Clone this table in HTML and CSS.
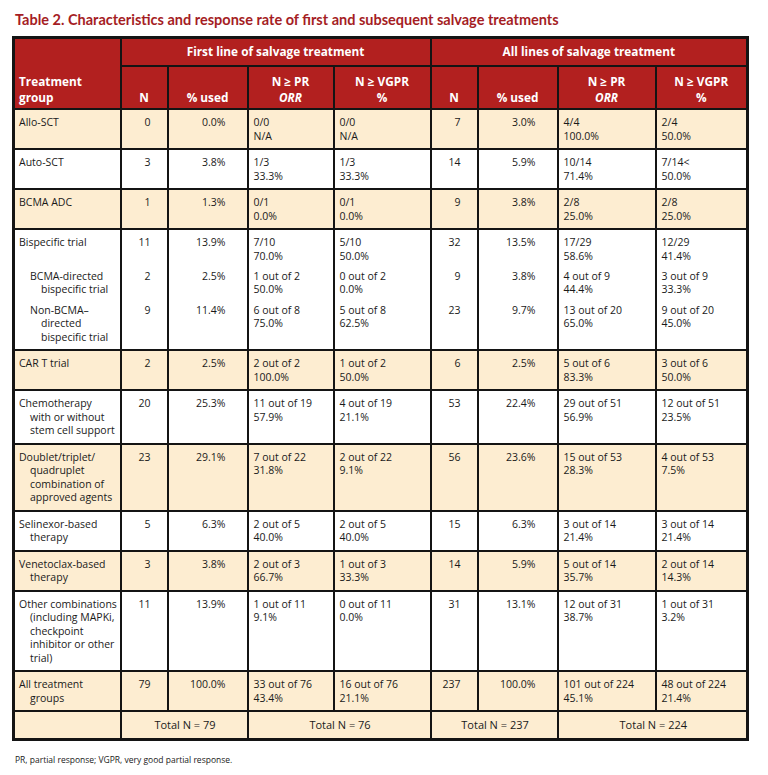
FILE: index.html
```html
<!DOCTYPE html>
<html>
<head>
<meta charset="utf-8">
<link rel="stylesheet" href="styles.css">
</head>
<body>
<div class="page">
  <h1 class="title">Table 2. Characteristics and response rate of first and subsequent salvage treatments</h1>
  <table class="tbl">
    <colgroup>
      <col class="c-group"><col class="c-n"><col class="c-pct"><col class="c-pr"><col class="c-vgpr">
      <col class="c-n2"><col class="c-pct"><col class="c-pr2"><col class="c-vgpr2">
    </colgroup>
    <thead>
      <tr class="h1">
        <th rowspan="2" class="th-group">Treatment<br>group</th>
        <th colspan="4">First line of salvage treatment</th>
        <th colspan="4">All lines of salvage treatment</th>
      </tr>
      <tr class="h2">
        <th>N</th><th>% used</th><th>N ≥ PR<br><i>ORR</i></th><th>N ≥ VGPR<br>%</th>
        <th>N</th><th>% used</th><th>N ≥ PR<br><i>ORR</i></th><th>N ≥ VGPR<br>%</th>
      </tr>
    </thead>
    <tbody>
      <tr class="beige">
        <td class="g">Allo-SCT</td><td class="n">0</td><td class="p">0.0%</td><td>0/0<br>N/A</td><td>0/0<br>N/A</td>
        <td class="n">7</td><td class="p">3.0%</td><td>4/4<br>100.0%</td><td>2/4<br>50.0%</td>
      </tr>
      <tr>
        <td class="g">Auto-SCT</td><td class="n">3</td><td class="p">3.8%</td><td>1/3<br>33.3%</td><td>1/3<br>33.3%</td>
        <td class="n">14</td><td class="p">5.9%</td><td>10/14<br>71.4%</td><td>7/14&lt;<br>50.0%</td>
      </tr>
      <tr class="beige">
        <td class="g">BCMA ADC</td><td class="n">1</td><td class="p">1.3%</td><td>0/1<br>0.0%</td><td>0/1<br>0.0%</td>
        <td class="n">9</td><td class="p">3.8%</td><td>2/8<br>25.0%</td><td>2/8<br>25.0%</td>
      </tr>
      <tr class="sub-first">
        <td class="g">Bispecific trial</td><td class="n">11</td><td class="p">13.9%</td><td>7/10<br>70.0%</td><td>5/10<br>50.0%</td>
        <td class="n">32</td><td class="p">13.5%</td><td>17/29<br>58.6%</td><td>12/29<br>41.4%</td>
      </tr>
      <tr class="sub-mid">
        <td class="g sub">BCMA-directed<br>bispecific trial</td><td class="n">2</td><td class="p">2.5%</td><td>1 out of 2<br>50.0%</td><td>0 out of 2<br>0.0%</td>
        <td class="n">9</td><td class="p">3.8%</td><td>4 out of 9<br>44.4%</td><td>3 out of 9<br>33.3%</td>
      </tr>
      <tr class="sub-last">
        <td class="g sub">Non-BCMA–<br>directed<br>bispecific trial</td><td class="n">9</td><td class="p">11.4%</td><td>6 out of 8<br>75.0%</td><td>5 out of 8<br>62.5%</td>
        <td class="n">23</td><td class="p">9.7%</td><td>13 out of 20<br>65.0%</td><td>9 out of 20<br>45.0%</td>
      </tr>
      <tr class="beige">
        <td class="g">CAR T trial</td><td class="n">2</td><td class="p">2.5%</td><td>2 out of 2<br>100.0%</td><td>1 out of 2<br>50.0%</td>
        <td class="n">6</td><td class="p">2.5%</td><td>5 out of 6<br>83.3%</td><td>3 out of 6<br>50.0%</td>
      </tr>
      <tr>
        <td class="g">Chemotherapy<br>with or without<br>stem cell support</td><td class="n">20</td><td class="p">25.3%</td><td>11 out of 19<br>57.9%</td><td>4 out of 19<br>21.1%</td>
        <td class="n">53</td><td class="p">22.4%</td><td>29 out of 51<br>56.9%</td><td>12 out of 51<br>23.5%</td>
      </tr>
      <tr class="beige">
        <td class="g">Doublet/triplet/<br>quadruplet<br>combination of<br>approved agents</td><td class="n">23</td><td class="p">29.1%</td><td>7 out of 22<br>31.8%</td><td>2 out of 22<br>9.1%</td>
        <td class="n">56</td><td class="p">23.6%</td><td>15 out of 53<br>28.3%</td><td>4 out of 53<br>7.5%</td>
      </tr>
      <tr>
        <td class="g">Selinexor-based<br>therapy</td><td class="n">5</td><td class="p">6.3%</td><td>2 out of 5<br>40.0%</td><td>2 out of 5<br>40.0%</td>
        <td class="n">15</td><td class="p">6.3%</td><td>3 out of 14<br>21.4%</td><td>3 out of 14<br>21.4%</td>
      </tr>
      <tr class="beige">
        <td class="g">Venetoclax-based<br>therapy</td><td class="n">3</td><td class="p">3.8%</td><td>2 out of 3<br>66.7%</td><td>1 out of 3<br>33.3%</td>
        <td class="n">14</td><td class="p">5.9%</td><td>5 out of 14<br>35.7%</td><td>2 out of 14<br>14.3%</td>
      </tr>
      <tr>
        <td class="g">Other combinations<br>(including MAPKi,<br>checkpoint<br>inhibitor or other<br>trial)</td><td class="n">11</td><td class="p">13.9%</td><td>1 out of 11<br>9.1%</td><td>0 out of 11<br>0.0%</td>
        <td class="n">31</td><td class="p">13.1%</td><td>12 out of 31<br>38.7%</td><td>1 out of 31<br>3.2%</td>
      </tr>
      <tr class="beige">
        <td class="g">All treatment<br>groups</td><td class="n">79</td><td class="p">100.0%</td><td>33 out of 76<br>43.4%</td><td>16 out of 76<br>21.1%</td>
        <td class="n">237</td><td class="p">100.0%</td><td>101 out of 224<br>45.1%</td><td>48 out of 224<br>21.4%</td>
      </tr>
      <tr class="beige total">
        <td></td><td colspan="2" class="t">Total N = 79</td><td colspan="2" class="t">Total N = 76</td>
        <td colspan="2" class="t">Total N = 237</td><td colspan="2" class="t">Total N = 224</td>
      </tr>
    </tbody>
  </table>
  <p class="foot">PR, partial response; VGPR, very good partial response.</p>
</div>
</body>
</html>
```
FILE: styles.css
```css
html, body {
  margin: 0;
  padding: 0;
  background: #ffffff;
}

.page {
  padding: 11px 20px 0 12px;
  font-family: "Open Sans", "Noto Sans", sans-serif;
  color: #1a1a1a;
}

.title {
  margin: 0 0 8px 3px;
  font-family: Lato, "Open Sans", sans-serif;
  font-size: 14.5px;
  line-height: 17px;
  font-weight: 700;
  color: #a51d24;
}

.tbl {
  width: 734px;
  table-layout: fixed;
  border-collapse: collapse;
  border: 3px solid #141414;
  font-size: 10.5px;
  line-height: 13.5px;
}

.c-group { width: 107px; }
.c-n { width: 47px; }
.c-pct { width: 80px; }
.c-pr { width: 86px; }
.c-vgpr { width: 97px; }
.c-n2 { width: 47px; }
.c-pr2 { width: 98px; }
.c-vgpr2 { width: 92px; }

.tbl th {
  background: #b2201f;
  color: #ffffff;
  font-weight: 700;
  font-size: 11.8px;
  line-height: 15.5px;
  border: 2px solid #141414;
  padding: 0 3px;
  text-align: center;
}

.tbl th i { font-style: italic; }

.tbl .h1 th {
  height: 26px;
  vertical-align: middle;
}

.tbl .h2 th {
  height: 38px;
  vertical-align: bottom;
  padding-bottom: 3px;
}

.tbl .h1 .th-group {
  text-align: left;
  vertical-align: bottom;
  padding: 0 3px 3px 4px;
}

.tbl td {
  border: 2px solid #141414;
  padding: 6px 3px 5px 5px;
  vertical-align: top;
  text-align: left;
}

.tbl tr.beige td { background: #fdedd1; }

.tbl td.g {
  padding-left: 15px;
  padding-right: 0;
  text-indent: -11px;
  white-space: nowrap;
}

.tbl td.g.sub {
  padding-left: 26px;
  text-indent: -11px;
}

.tbl td.n {
  text-align: right;
  padding-right: 16px;
}

.tbl td.p {
  text-align: right;
  padding-right: 21px;
}

.tbl tr.sub-first td { padding-bottom: 3px; }
.tbl tr.sub-mid td { border-top: hidden; padding-top: 3.5px; padding-bottom: 3.5px; }
.tbl tr.sub-last td { border-top: hidden; padding-top: 3.5px; }

.tbl tr.total td {
  padding-top: 6px;
  padding-bottom: 6px;
  font-size: 11px;
}

.tbl td.t { text-align: center; }

.foot {
  margin: 13px 0 0 3px;
  font-size: 8.5px;
  line-height: 11px;
  color: #1a1a1a;
}
```
